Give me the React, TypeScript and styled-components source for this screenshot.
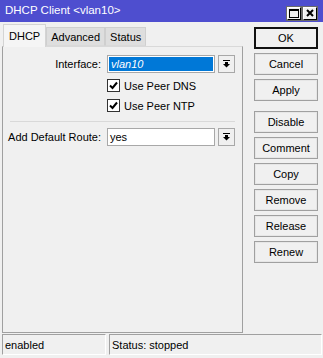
import styled, { createGlobalStyle } from 'styled-components';

const GlobalStyle = createGlobalStyle`
  html, body {
    margin: 0;
    padding: 0;
    background: #f0f0f0;
  }
  * {
    box-sizing: border-box;
  }
`;

const Window = styled.div`
  width: 323px;
  height: 358px;
  display: flex;
  flex-direction: column;
  background: #f0f0f0;
  font-family: 'Liberation Sans', Arial, sans-serif;
  font-size: 11px;
  color: #000;
  overflow: hidden;
`;

const TitleBar = styled.div`
  height: 22px;
  display: flex;
  align-items: center;
  justify-content: space-between;
  padding: 0 6px 0 5px;
  background: #4e4ecf;
  color: #fff;
  font-size: 11.5px;
`;

const TitleText = styled.span`
  padding-bottom: 2px;
`;

const TitleButtons = styled.div`
  display: flex;
  gap: 2px;
  margin-top: 4px;
`;

const TitleButton = styled.div`
  width: 14px;
  height: 13px;
  display: flex;
  align-items: center;
  justify-content: center;
  background: #f0f0f0;
  border: 1px solid #000;
  border-top-color: #fff;
  border-left-color: #fff;
  box-shadow: 0 0 0 1px #6a6a6a;
`;

const Body = styled.div`
  display: flex;
  padding: 2px 0 0 2px;
`;

const TabColumn = styled.div`
  width: 241px;
  display: flex;
  flex-direction: column;
`;

const TabRow = styled.div`
  height: 22px;
  display: flex;
  align-items: flex-end;
  padding-left: 1px;
`;

const Tab = styled.div<{ $active?: boolean }>`
  height: ${(p) => (p.$active ? '23px' : '19px')};
  padding: ${(p) => (p.$active ? '4px 5px 0 5px' : '2px 4px 0 4px')};
  margin-bottom: ${(p) => (p.$active ? '-1px' : '0')};
  background: ${(p) => (p.$active ? '#f5f5f5' : '#dedede')};
  border: 1px solid ${(p) => (p.$active ? '#d4d4d4' : '#cfcfcf')};
  border-bottom: ${(p) => (p.$active ? 'none' : '1px solid #d9d9d9')};
  position: relative;
  z-index: ${(p) => (p.$active ? 1 : 0)};
  line-height: 14px;
`;

const Panel = styled.div`
  height: 287px;
  border: 1px solid #a0a0a0;
  border-top-color: #d9d9d9;
  padding: 8px 0 0 0;
  display: flex;
  flex-direction: column;
`;

const FieldRow = styled.div`
  display: flex;
  align-items: center;
  height: 18px;
`;

const FieldLabel = styled.div`
  width: 98px;
  margin-right: 6px;
  text-align: right;
  white-space: nowrap;
`;

const Input = styled.div<{ $selected?: boolean }>`
  width: 108px;
  height: 18px;
  display: flex;
  align-items: center;
  padding-left: ${(p) => (p.$selected ? '1px' : '2px')};
  background: #fff;
  border: 1px solid #a8a8a8;
`;

const SelectedText = styled.span`
  flex: 1;
  height: 14px;
  margin-right: 1px;
  padding-left: 2px;
  line-height: 14px;
  background: #0078d7;
  color: #fff;
  font-style: italic;
`;

const DropButton = styled.div`
  width: 17px;
  height: 18px;
  margin-left: 3px;
  display: flex;
  align-items: center;
  justify-content: center;
  background: #f0f0f0;
  border: 1px solid #a8a8a8;
`;

const CheckRow = styled.div<{ $gap: number }>`
  display: flex;
  align-items: center;
  height: 13px;
  margin-top: ${(p) => p.$gap}px;
  padding-left: 104px;
`;

const CheckBox = styled.div`
  width: 13px;
  height: 13px;
  margin-right: 4px;
  display: flex;
  align-items: center;
  justify-content: center;
  background: #fff;
  border: 1px solid #333;
`;

const Separator = styled.div`
  height: 1px;
  margin: 9px 7px 6px 7px;
  background: #d9d9d9;
`;

const ButtonColumn = styled.div`
  width: 64px;
  margin: 3px 0 0 11px;
  display: flex;
  flex-direction: column;
  gap: 4px;
`;

const ActionButton = styled.div<{ $default?: boolean; $spaced?: boolean }>`
  height: 22px;
  display: flex;
  align-items: center;
  justify-content: center;
  margin-top: ${(p) => (p.$spaced ? '6px' : '0')};
  background: #f0f0f0;
  border: ${(p) => (p.$default ? '2px solid #111' : '1px solid #a0a0a0')};
  box-shadow: ${(p) => (p.$default ? 'none' : 'inset 0 0 0 1px #e6e6e6')};
`;

const StatusBar = styled.div`
  display: flex;
  gap: 3px;
  margin-top: 1px;
  padding-left: 2px;
`;

const StatusCell = styled.div<{ $width: number }>`
  width: ${(p) => p.$width}px;
  height: 21px;
  display: flex;
  align-items: center;
  padding-left: 2px;
  border: 1px solid #fff;
  border-top-color: #a0a0a0;
  border-left-color: #a0a0a0;
`;

const DropArrow = () => (
  <svg width="7" height="8" viewBox="0 0 7 8">
    <rect x="0" y="0" width="7" height="1" fill="#000" />
    <rect x="2" y="2" width="3" height="2" fill="#000" />
    <polygon points="0,4 7,4 3.5,7.5" fill="#000" />
  </svg>
);

const CheckMark = () => (
  <svg width="9" height="9" viewBox="0 0 9 9">
    <polyline points="1,4.5 3.5,7 8,1.5" fill="none" stroke="#000" strokeWidth="2" />
  </svg>
);

const buttons = ['OK', 'Cancel', 'Apply', 'Disable', 'Comment', 'Copy', 'Remove', 'Release', 'Renew'];

const App = () => (
  <>
    <GlobalStyle />
    <Window>
      <TitleBar>
        <TitleText>DHCP Client &lt;vlan10&gt;</TitleText>
        <TitleButtons>
          <TitleButton>
            <svg width="10" height="9" viewBox="0 0 10 9">
              <rect x="0.5" y="0.5" width="9" height="8" fill="none" stroke="#000" />
              <rect x="0" y="0" width="10" height="2" fill="#000" />
            </svg>
          </TitleButton>
          <TitleButton>
            <svg width="8" height="8" viewBox="0 0 8 8">
              <path d="M1 1 L7 7 M7 1 L1 7" stroke="#000" strokeWidth="2" />
            </svg>
          </TitleButton>
        </TitleButtons>
      </TitleBar>
      <Body>
        <TabColumn>
          <TabRow>
            <Tab $active>DHCP</Tab>
            <Tab>Advanced</Tab>
            <Tab>Status</Tab>
          </TabRow>
          <Panel>
            <FieldRow>
              <FieldLabel>Interface:</FieldLabel>
              <Input $selected>
                <SelectedText>vlan10</SelectedText>
              </Input>
              <DropButton>
                <DropArrow />
              </DropButton>
            </FieldRow>
            <CheckRow $gap={6}>
              <CheckBox>
                <CheckMark />
              </CheckBox>
              Use Peer DNS
            </CheckRow>
            <CheckRow $gap={7}>
              <CheckBox>
                <CheckMark />
              </CheckBox>
              Use Peer NTP
            </CheckRow>
            <Separator />
            <FieldRow>
              <FieldLabel>Add Default Route:</FieldLabel>
              <Input>yes</Input>
              <DropButton>
                <DropArrow />
              </DropButton>
            </FieldRow>
          </Panel>
        </TabColumn>
        <ButtonColumn>
          {buttons.map((b) => (
            <ActionButton key={b} $default={b === 'OK'} $spaced={b === 'Disable'}>
              {b}
            </ActionButton>
          ))}
        </ButtonColumn>
      </Body>
      <StatusBar>
        <StatusCell $width={104}>enabled</StatusCell>
        <StatusCell $width={213}>Status: stopped</StatusCell>
      </StatusBar>
    </Window>
  </>
);

export default App;
